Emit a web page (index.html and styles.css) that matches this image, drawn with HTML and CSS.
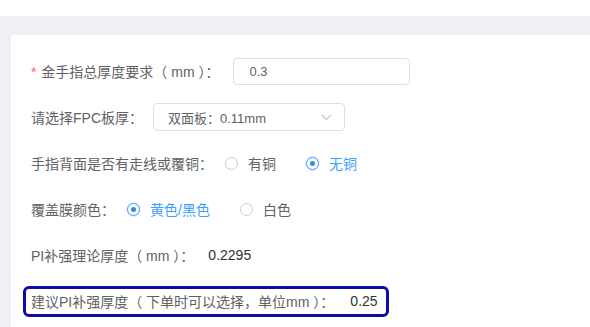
FILE: index.html
```html
<!DOCTYPE html>
<html lang="zh-CN">
<head>
    <meta charset="UTF-8">
    <title>金手指厚度计算</title>
    <link rel="stylesheet" href="styles.css">
</head>
<body>
    <div class="top-strip"></div>
    <div class="page">
        <div class="card">
            <div class="form-row">
                <span class="label"><span class="required">*</span> 金手指总厚度要求（ mm ）：</span>
                <div class="input-box">0.3</div>
            </div>

            <div class="form-row">
                <span class="label label-select">请选择FPC板厚：</span>
                <div class="select-box">
                    <span>双面板：0.11mm</span>
                    <svg class="chevron" width="11" height="7" viewBox="0 0 11 7">
                        <path d="M1 1 L5.5 5.5 L10 1" fill="none" stroke="#c0c4cc" stroke-width="1.1"/>
                    </svg>
                </div>
            </div>

            <div class="form-row">
                <span class="label label-radio">手指背面是否有走线或覆铜：</span>
                <label class="radio"><span class="radio-dot"></span>有铜</label>
                <label class="radio checked"><span class="radio-dot"></span>无铜</label>
            </div>

            <div class="form-row">
                <span class="label label-radio">覆盖膜颜色：</span>
                <label class="radio checked"><span class="radio-dot"></span>黄色/黑色</label>
                <label class="radio"><span class="radio-dot"></span>白色</label>
            </div>

            <div class="form-row">
                <span class="label">PI补强理论厚度（ mm ）：</span>
                <span class="value">0.2295</span>
            </div>

            <div class="form-row">
                <div class="highlight">
                    <span class="label">建议PI补强厚度（ 下单时可以选择，单位mm ）：</span>
                    <span class="value">0.25</span>
                </div>
            </div>
        </div>
    </div>
</body>
</html>
```

FILE: styles.css
```css
* {
    box-sizing: border-box;
}

body {
    margin: 0;
    background: #fff;
    font-family: "Liberation Sans", "Noto Sans CJK SC", sans-serif;
    font-size: 14px;
    color: #606266;
    overflow: hidden;
}

.top-strip {
    height: 16px;
    background: #fff;
}

.page {
    background: #eef0f5;
    padding: 19px 0 0 11px;
    height: 311px;
}

.card {
    background: #fff;
    padding: 22px 20px 0 20px;
    height: 100%;
}

.form-row {
    display: flex;
    align-items: center;
    height: 28px;
    margin-bottom: 18px;
}

.label {
    margin-right: 14px;
    white-space: nowrap;
}

.label-select {
    margin-right: 10px;
}

.label-radio {
    margin-right: 12px;
}

.required {
    color: #f56c6c;
    margin-right: 1px;
}

.input-box {
    width: 177px;
    height: 27px;
    line-height: 25px;
    padding-left: 15px;
    border: 1px solid #dcdfe6;
    border-radius: 4px;
    font-size: 13px;
}

.select-box {
    width: 192px;
    height: 28px;
    padding: 0 12px 0 14px;
    border: 1px solid #dcdfe6;
    border-radius: 4px;
    display: flex;
    align-items: center;
    justify-content: space-between;
    font-size: 13px;
}

.radio {
    display: flex;
    align-items: center;
    margin-right: 30px;
    cursor: pointer;
}

.radio-dot {
    width: 13px;
    height: 13px;
    border: 1px solid #c8ccd4;
    border-radius: 50%;
    margin-right: 10px;
    position: relative;
    background: #fff;
}

.radio.checked {
    color: #409eff;
}

.radio.checked .radio-dot {
    border-color: #409eff;
    box-shadow: 0 0 0 1px #e3effc;
}

.radio.checked .radio-dot::after {
    content: "";
    position: absolute;
    left: 3px;
    top: 3px;
    width: 5px;
    height: 5px;
    border-radius: 50%;
    background: #2f8fd8;
}

.value {
    color: #303133;
}

.highlight {
    display: flex;
    align-items: center;
    margin-left: -8px;
    height: 31px;
    padding: 0 8px 0 5px;
    border: 3px solid #0c0ca6;
    border-radius: 6px;
}

.highlight .label {
    margin-right: 16px;
}
```
